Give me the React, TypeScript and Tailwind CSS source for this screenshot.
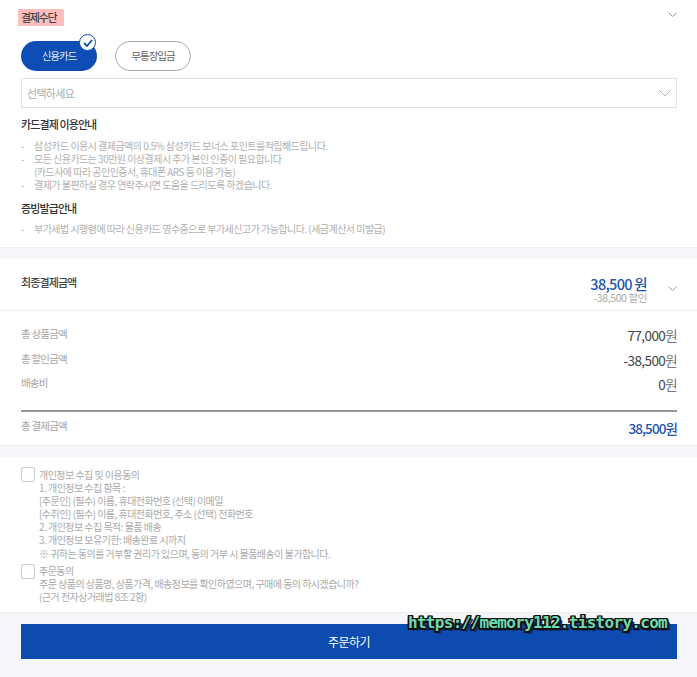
const kr = "font-['Noto_Sans_CJK_KR','Noto_Sans',sans-serif]";

function Chevron() {
  return (
    <svg width="9" height="5" viewBox="0 0 9 5" fill="none" stroke="#999" strokeWidth="1">
      <path d="M0.5 0.5l4 4 4-4" />
    </svg>
  );
}

function Row({ label, value }: { label: string; value: string }) {
  return (
    <div className="flex h-[24.5px] items-start justify-between">
      <span className="text-[10.5px] leading-[14px] tracking-[-0.8px] text-[#a5a5a5]">{label}</span>
      <span className="-mt-[1px] text-[13.5px] leading-[18px] tracking-[-0.6px] text-[#444]">
        {value.replace("원", "")}
        <span className="text-[#777]">원</span>
      </span>
    </div>
  );
}

export default function App() {
  return (
    <div className={`relative flex h-[677px] w-[697px] flex-col overflow-hidden bg-[#f5f6fa] ${kr}`}>
      {/* 결제수단 */}
      <section className="h-[248px] border-b border-[#eceef2] bg-white pr-[20px] pl-[21px]">
        <div className="flex h-[34px] items-start justify-between">
          <h2 className="mt-[9px] -ml-[3px] h-[17px] w-[46px] bg-[#ffbdbd] pl-[3px] text-[11px] leading-[16px] font-medium tracking-[-1.3px] text-[#444]">
            결제수단
          </h2>
          <div className="mt-[12px]">
            <Chevron />
          </div>
        </div>
        <div className="mt-[7px] flex gap-[18px]">
          <button className="relative h-[30px] w-[76px] rounded-full bg-[#0e4db4] text-[10.5px] tracking-[-1px] text-[#dfe8f7]">
            신용카드
            <span className="absolute -top-[7px] right-[1px] flex h-[17px] w-[17px] items-center justify-center rounded-full border border-[#0e4db4] bg-white">
              <svg width="10" height="8" viewBox="0 0 10 8" fill="none" stroke="#0e4db4" strokeWidth="1.8">
                <path d="M1 4l3 3 5-6" />
              </svg>
            </span>
          </button>
          <button className="h-[30px] w-[76px] rounded-full border border-[#a8a8a8] bg-white text-[10.5px] tracking-[-1px] text-[#666]">
            무통장입금
          </button>
        </div>
        <div className="mt-[7px] flex h-[30px] items-center justify-between border border-[#e2e2e2] pr-[4px] pl-[5px]">
          <span className="text-[11px] tracking-[-0.7px] text-[#aaa]">선택하세요</span>
          <svg width="14" height="8" viewBox="0 0 14 8" fill="none" stroke="#b5b5b5" strokeWidth="1">
            <path d="M1 1l6 6 6-6" />
          </svg>
        </div>
        <h3 className="mt-[8px] text-[11px] leading-[16px] font-medium tracking-[-0.9px] text-[#333]">카드결제 이용안내</h3>
        <ul className="mt-[7px] text-[10px] leading-[13px] tracking-[-0.53px] text-[#b0b0b0]">
          <li className="flex">
            <span className="w-[13px]">-</span>
            <span>삼성카드 이용시 결제금액의 0.5% 삼성카드 보너스 포인트를적립해드립니다.</span>
          </li>
          <li className="flex">
            <span className="w-[13px]">-</span>
            <span>
              모든 신용카드는 30만원 이상결제시 추가 본인 인증이 필요합니다
              <br />
              (카드사에 따라 공인인증서, 휴대폰 ARS 등 이용 가능)
            </span>
          </li>
          <li className="flex">
            <span className="w-[13px]">-</span>
            <span>결제가 불편하실 경우 연락주시면 도움을 드리도록 하겠습니다.</span>
          </li>
        </ul>
        <h3 className="mt-[9px] text-[11px] leading-[16px] font-medium tracking-[-0.9px] text-[#333]">증빙발급안내</h3>
        <ul className="mt-[6px] text-[10px] leading-[13px] tracking-[-0.53px] text-[#b0b0b0]">
          <li className="flex">
            <span className="w-[13px]">-</span>
            <span>부가세법 시행령에 따라 신용카드 영수증으로 부가세신고가 가능합니다. (세금계산서 미발급)</span>
          </li>
        </ul>
      </section>

      {/* 최종결제금액 */}
      <section className="mt-[11px] flex h-[52px] items-start justify-between border-b border-[#eceef2] bg-white pr-[20px] pl-[21px]">
        <h3 className="mt-[15px] text-[11px] leading-[16px] font-medium tracking-[-0.9px] text-[#444]">최종결제금액</h3>
        <div className="flex items-start">
          <div className="mt-[15px] text-right">
            <div className="text-[14.5px] leading-[19px] font-medium tracking-[-0.7px] text-[#1f55ae]">38,500 원</div>
            <div className="-mt-[1px] text-[10.5px] leading-[12px] tracking-[-0.4px] text-[#aaa]">-38,500 할인</div>
          </div>
          <div className="mt-[27px] ml-[21px]">
            <Chevron />
          </div>
        </div>
      </section>

      <section className="h-[135px] border-b border-[#eceef2] bg-white pt-[16px] pr-[20px] pl-[21px]">
        <Row label="총 상품금액" value="77,000원" />
        <Row label="총 할인금액" value="-38,500원" />
        <Row label="배송비" value="0원" />
        <div className="mt-[9px] border-t-2 border-[#999]" />
        <div className="mt-[7px] flex items-start justify-between">
          <span className="text-[10.5px] leading-[14px] tracking-[-0.8px] text-[#a5a5a5]">총 결제금액</span>
          <span className="text-[13.5px] leading-[18px] font-medium tracking-[-0.9px] text-[#1f55ae]">38,500원</span>
        </div>
      </section>

      {/* 동의 */}
      <section className="mt-[11px] h-[156px] border-b border-[#eceef2] bg-white pt-[10px] pr-[20px] pl-[21px] text-[10px] leading-[13.1px] tracking-[-0.53px] text-[#aaa]">
        <div className="flex gap-[4px]">
          <span className="h-[15px] w-[14px] shrink-0 rounded-[2px] border border-[#ccc]" />
          <p className="pt-[1px]">
            개인정보 수집 및 이용동의
            <br />
            1. 개인정보 수집 항목 :
            <br />
            [주문인] (필수) 이름, 휴대전화번호 (선택) 이메일
            <br />
            [수취인] (필수) 이름, 휴대전화번호, 주소 (선택) 전화번호
            <br />
            2. 개인정보 수집 목적: 물품 배송
            <br />
            3. 개인정보 보유기한: 배송완료 시까지
            <br />※ 귀하는 동의를 거부할 권리가 있으며, 동의 거부 시 물품배송이 불가합니다.
          </p>
        </div>
        <div className="mt-[4px] flex gap-[4px]">
          <span className="h-[15px] w-[14px] shrink-0 rounded-[2px] border border-[#ccc]" />
          <p>
            주문동의
            <br />
            주문 상품의 상품명, 상품가격, 배송정보를 확인하였으며, 구매에 동의 하시겠습니까?
            <br />
            (근거 전자상거래법 8조 2항)
          </p>
        </div>
      </section>

      <div className="pt-[11px] pr-[20px] pl-[21px]">
        <button className="h-[35px] w-full bg-[#0e4bb0] text-[12px] tracking-[-0.6px] text-white">주문하기</button>
      </div>

      {/* 워터마크 */}
      <div className="absolute top-[612px] left-[408px] font-['DejaVu_Sans_Mono',monospace] text-[16px] leading-[22px] font-bold tracking-[-0.7px] whitespace-nowrap text-[#6fd8b0] [text-shadow:1.5px_0_0_#111,-1.5px_0_0_#111,0_1.5px_0_#111,0_-1.5px_0_#111,1.5px_1.5px_0_#111,-1.5px_-1.5px_0_#111,1.5px_-1.5px_0_#111,-1.5px_1.5px_0_#111,3px_3px_0_#0b2f6e]">
        https://memory112.tistory.com
      </div>
    </div>
  );
}
